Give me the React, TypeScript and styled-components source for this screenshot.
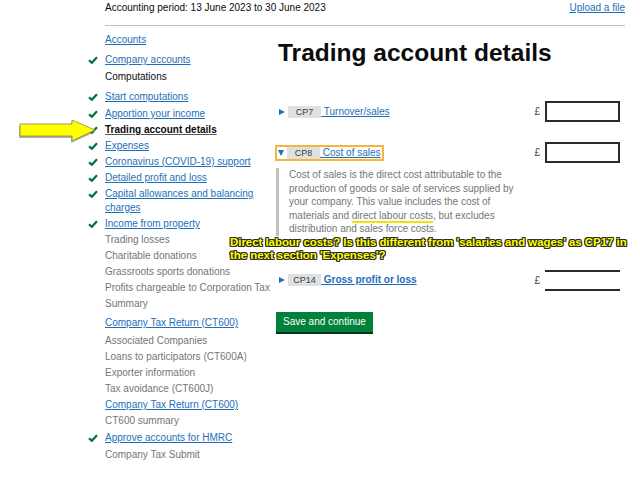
import React from 'react';
import styled, { createGlobalStyle } from 'styled-components';

const GlobalStyle = createGlobalStyle`
  body {
    margin: 0;
    background: #ffffff;
    color: #0b0c0c;
    font-family: "Liberation Sans", Arial, sans-serif;
  }
`;

type NavKind = 'link' | 'text' | 'current' | 'muted';

interface NavEntry {
  label: string;
  kind: NavKind;
  done?: boolean;
  space?: number;
}

const navEntries: NavEntry[] = [
  { label: 'Accounts', kind: 'link', space: 1 },
  { label: 'Company accounts', kind: 'link', done: true, space: 4 },
  { label: 'Computations', kind: 'text', space: 1 },
  { label: 'Start computations', kind: 'link', done: true, space: 4 },
  { label: 'Apportion your income', kind: 'link', done: true, space: 1 },
  { label: 'Trading account details', kind: 'current', done: true },
  { label: 'Expenses', kind: 'link', done: true },
  { label: 'Coronavirus (COVID-19) support', kind: 'link', done: true },
  { label: 'Detailed profit and loss', kind: 'link', done: true },
  { label: 'Capital allowances and balancing charges', kind: 'link', done: true },
  { label: 'Income from property', kind: 'link', done: true },
  { label: 'Trading losses', kind: 'muted' },
  { label: 'Charitable donations', kind: 'muted' },
  { label: 'Grassroots sports donations', kind: 'muted' },
  { label: 'Profits chargeable to Corporation Tax', kind: 'muted' },
  { label: 'Summary', kind: 'muted' },
  { label: 'Company Tax Return (CT600)', kind: 'link', space: 3 },
  { label: 'Associated Companies', kind: 'muted', space: 2 },
  { label: 'Loans to participators (CT600A)', kind: 'muted' },
  { label: 'Exporter information', kind: 'muted' },
  { label: 'Tax avoidance (CT600J)', kind: 'muted' },
  { label: 'Company Tax Return (CT600)', kind: 'link' },
  { label: 'CT600 summary', kind: 'muted' },
  { label: 'Approve accounts for HMRC', kind: 'link', done: true, space: 1 },
  { label: 'Company Tax Submit', kind: 'muted', space: 1 },
];

const kindColor: Record<NavKind, string> = {
  link: '#1d70b8',
  text: '#0b0c0c',
  current: '#0b0c0c',
  muted: '#6f777b',
};

const Page = styled.div`
  position: relative;
  width: 520px;
  margin-left: 105px;
`;

const Header = styled.header`
  display: flex;
  justify-content: space-between;
  align-items: flex-start;
  box-sizing: border-box;
  height: 26px;
  padding-top: 2px;
  border-bottom: 1px solid #bfc1c3;
  font-size: 10px;
  line-height: 12px;
`;

const Link = styled.a<{ $bold?: boolean }>`
  color: #1d70b8;
  text-decoration: underline;
  text-underline-offset: 1px;
  font-weight: ${(p) => (p.$bold ? 700 : 400)};
  cursor: pointer;
`;

const Layout = styled.div`
  display: grid;
  grid-template-columns: 171px 1fr;
`;

const Nav = styled.ul`
  list-style: none;
  margin: 5px 0 0 -17px;
  padding: 0;
  width: 185px;
`;

const NavItem = styled.li<{ $kind: NavKind; $space: number }>`
  display: flex;
  align-items: flex-start;
  margin-top: ${(p) => p.$space}px;
  padding: 1px 0;
  font-size: 10px;
  line-height: 14px;
  color: ${(p) => kindColor[p.$kind]};
  font-weight: ${(p) => (p.$kind === 'current' ? 700 : 400)};
`;

const CheckSlot = styled.span`
  flex: 0 0 17px;
  height: 14px;
  display: flex;
  align-items: center;
`;

const NavLabel = styled.span<{ $kind: NavKind }>`
  ${(p) =>
    p.$kind === 'link' || p.$kind === 'current'
      ? 'text-decoration: underline; text-underline-offset: 1px;'
      : ''}
  ${(p) => (p.$kind === 'current' ? 'text-decoration-color: #505a5f;' : '')}
  cursor: ${(p) => (p.$kind === 'link' ? 'pointer' : 'default')};
`;

const Main = styled.main`
  padding-right: 5px;
`;

const Title = styled.h1`
  margin: 13px 0 0 2px;
  font-size: 24.5px;
  line-height: 28px;
  font-weight: 700;
`;

const Row = styled.div<{ $top: number }>`
  display: flex;
  align-items: center;
  justify-content: space-between;
  margin-top: ${(p) => p.$top}px;
`;

const Summary = styled.div<{ $focused?: boolean }>`
  display: inline-flex;
  align-items: center;
  height: 12px;
  margin-left: -1px;
  padding: 0 1px;
  border: 2px solid ${(p) => (p.$focused ? '#f8b53c' : 'transparent')};
  font-size: 10px;
  line-height: 12px;
`;

const Caret = styled.span<{ $open?: boolean }>`
  width: 0;
  height: 0;
  margin-right: 3px;
  ${(p) =>
    p.$open
      ? `border-left: 3.5px solid transparent;
         border-right: 3.5px solid transparent;
         border-top: 6px solid #1d70b8;`
      : `border-top: 3.5px solid transparent;
         border-bottom: 3.5px solid transparent;
         border-left: 6px solid #1d70b8;
         margin-left: 1px;`}
`;

const Tag = styled.span`
  width: 33px;
  height: 12px;
  background: #dee0e2;
  color: #383f43;
  font-size: 9px;
  line-height: 12px;
  text-align: center;
`;

const Amount = styled.label`
  display: flex;
  align-items: center;
  gap: 5px;
  font-size: 10px;
  color: #383f43;
`;

const AmountInput = styled.input<{ $computed?: boolean }>`
  box-sizing: border-box;
  width: 75px;
  height: ${(p) => (p.$computed ? 21 : 21)}px;
  margin: 0;
  padding: 0 4px;
  border: 2px solid #2b2b2b;
  ${(p) => (p.$computed ? 'border-left: none; border-right: none;' : '')}
  border-radius: 0;
  background: #fff;
  font: 10px "Liberation Sans", Arial, sans-serif;
  outline: none;
`;

const Note = styled.p`
  box-sizing: border-box;
  width: 242px;
  margin: 5px 0 0 0;
  padding-left: 10px;
  border-left: 3px solid #bfc1c3;
  color: #6f777b;
  font-size: 10px;
  line-height: 13.5px;
`;

const Marked = styled.span`
  text-decoration: underline;
  text-decoration-color: #f2e400;
  text-decoration-thickness: 2px;
  text-underline-offset: 2px;
`;

const SaveButton = styled.button`
  margin-top: 21px;
  height: 20px;
  padding: 0 7px;
  border: none;
  border-radius: 0;
  background: #00823b;
  box-shadow: 0 2px 0 #003618;
  color: #ffffff;
  font: 10px "Liberation Sans", Arial, sans-serif;
  cursor: pointer;
`;

const Callout = styled.p`
  position: absolute;
  left: 125px;
  top: 236px;
  margin: 0;
  width: 420px;
  color: #ffff00;
  font: 700 11.4px/13px "Liberation Sans", Arial, sans-serif;
  white-space: nowrap;
  text-shadow: -1px -1px 0 #2a2a2a, 1px -1px 0 #2a2a2a, -1px 1px 0 #2a2a2a,
    1px 1px 0 #2a2a2a, 0 1px 0 #2a2a2a, 0 -1px 0 #2a2a2a, 1px 0 0 #2a2a2a,
    -1px 0 0 #2a2a2a;
`;

const Pointer = styled.svg`
  position: absolute;
  left: -87px;
  top: 117px;
`;

function Tick() {
  return (
    <svg width="10" height="8" viewBox="0 0 10 8" aria-hidden="true">
      <path
        d="M1 4.2 L3.8 6.8 L9 1.2"
        fill="none"
        stroke="#00703c"
        strokeWidth="2.2"
      />
    </svg>
  );
}

interface ItemRowProps {
  code: string;
  label: string;
  top: number;
  open?: boolean;
  focused?: boolean;
  bold?: boolean;
  computed?: boolean;
}

function ItemRow({ code, label, top, open, focused, bold, computed }: ItemRowProps) {
  return (
    <Row $top={top}>
      <Summary $focused={focused}>
        <Caret $open={open} />
        <Tag>{code}</Tag>
        <Link $bold={bold}>{'\u00a0' + label}</Link>
      </Summary>
      <Amount>
        £
        <AmountInput
          $computed={computed}
          aria-label={label}
          defaultValue=""
          readOnly={computed}
        />
      </Amount>
    </Row>
  );
}

export default function App() {
  return (
    <Page>
      <GlobalStyle />
      <Header>
        <span>Accounting period: 13 June 2023 to 30 June 2023</span>
        <Link>Upload a file</Link>
      </Header>
      <Layout>
        <Nav>
          {navEntries.map((entry, i) => (
            <NavItem key={i} $kind={entry.kind} $space={entry.space ?? 0}>
              <CheckSlot>{entry.done && <Tick />}</CheckSlot>
              <NavLabel $kind={entry.kind}>{entry.label}</NavLabel>
            </NavItem>
          ))}
        </Nav>
        <Main>
          <Title>Trading account details</Title>
          <ItemRow code="CP7" label="Turnover/sales" top={34} />
          <ItemRow code="CP8" label="Cost of sales" top={20} open focused />
          <Note>
            Cost of sales is the direct cost attributable to the production of
            goods or sale of services supplied by your company. This value
            includes the cost of materials and <Marked>direct labour costs</Marked>
            , but excludes distribution and sales force costs.
          </Note>
          <ItemRow code="CP14" label="Gross profit or loss" top={34} bold computed />
          <SaveButton>Save and continue</SaveButton>
        </Main>
      </Layout>

      <Callout>
        Direct labour costs? Is this different from 'salaries and wages' as CP17 in
        <br />
        the next section 'Expenses'?
      </Callout>

      <Pointer width="82" height="28" viewBox="0 0 82 28" aria-hidden="true">
        <polygon
          points="1,9 53,9 53,5 77,15 53,26 53,21 1,21"
          fill="#6b6b6b"
          opacity="0.55"
        />
        <polygon
          points="2,7 54,7 54,3 77,13 54,24 54,19 2,19"
          fill="#ffff00"
          stroke="#8a8a3a"
          strokeWidth="0.8"
        />
      </Pointer>
    </Page>
  );
}
